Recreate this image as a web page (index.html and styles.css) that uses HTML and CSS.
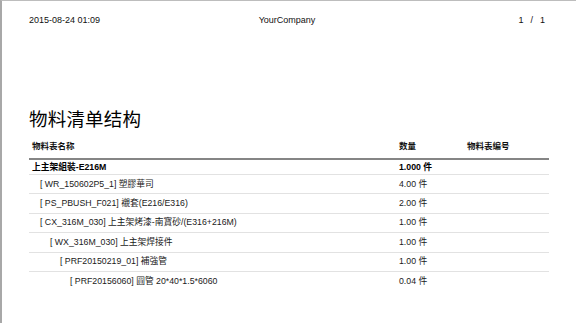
FILE: index.html
```html
<!DOCTYPE html>
<html>
<head>
<meta charset="utf-8">
<link rel="stylesheet" href="styles.css">
</head>
<body>
<div class="page">
  <header class="page-header">
    <span class="date">2015-08-24 01:09</span>
    <span class="company">YourCompany</span>
    <span class="pager"><span>1</span><span>/</span><span>1</span></span>
  </header>
  <h1 class="title">物料清单结构</h1>
  <table class="bom">
    <thead>
      <tr><th class="c-name">物料表名称</th><th class="c-qty">数量</th><th class="c-code">物料表编号</th></tr>
    </thead>
    <tbody>
      <tr class="root"><td>上主架組裝-E216M</td><td>1.000 件</td><td></td></tr>
      <tr><td class="l1">[ WR_150602P5_1] 塑膠華司</td><td>4.00 件</td><td></td></tr>
      <tr><td class="l1">[ PS_PBUSH_F021] 襯套(E216/E316)</td><td>2.00 件</td><td></td></tr>
      <tr><td class="l1">[ CX_316M_030] 上主架烤漆-南寶砂/(E316+216M)</td><td>1.00 件</td><td></td></tr>
      <tr><td class="l2">[ WX_316M_030] 上主架焊接件</td><td>1.00 件</td><td></td></tr>
      <tr><td class="l3">[ PRF20150219_01] 補強管</td><td>1.00 件</td><td></td></tr>
      <tr class="last"><td class="l4">[ PRF20156060] 圓管 20*40*1.5*6060</td><td>0.04 件</td><td></td></tr>
    </tbody>
  </table>
</div>
</body>
</html>
```
FILE: styles.css
```css
html, body {
  margin: 0;
  padding: 0;
  background: #fff;
}
body {
  font-family: "Liberation Sans", "Noto Sans CJK SC", sans-serif;
  color: #111;
  font-size: 9px;
  border-top: 1px solid #bdbdbd;
  border-left: 2px solid #a8a8a8;
  height: 323px;
  box-sizing: border-box;
  overflow: hidden;
}
.page {
  padding: 0 31px 0 27px;
}
.page-header {
  display: grid;
  grid-template-columns: 1fr auto 1fr;
  padding-top: 14px;
  line-height: 11px;
}
.company { text-align: center; }
.pager {
  display: flex;
  justify-content: flex-end;
  gap: 7px;
}
.title {
  margin: 83px 0 0 0;
  font-size: 18.5px;
  line-height: 22px;
  font-weight: normal;
  color: #000;
  letter-spacing: 0.2px;
}
.bom {
  width: 520px;
  border-collapse: collapse;
  margin-top: 0;
  table-layout: fixed;
}
.bom th, .bom td {
  text-align: left;
  padding: 0 3px;
  line-height: 11px;
  white-space: nowrap;
}
.bom th {
  font-weight: bold;
  height: 21px;
  vertical-align: bottom;
  padding-bottom: 6px;
  border-bottom: 2px solid #858585;
  font-size: 8.5px;
}
.c-name { width: 361px; }
.c-qty { width: 62px; }
.bom td {
  height: 18.4px;
  border-bottom: 1px solid #e2e2e2;
  vertical-align: middle;
  font-size: 8.75px;
  color: #1a1a1a;
}
.bom tr.root td {
  font-weight: bold;
  height: 14px;
  color: #000;
}
.bom tr.last td { border-bottom: none; }
.bom td.l1 { padding-left: 11px; }
.bom td.l2 { padding-left: 21px; }
.bom td.l3 { padding-left: 31px; }
.bom td.l4 { padding-left: 41px; }
```
